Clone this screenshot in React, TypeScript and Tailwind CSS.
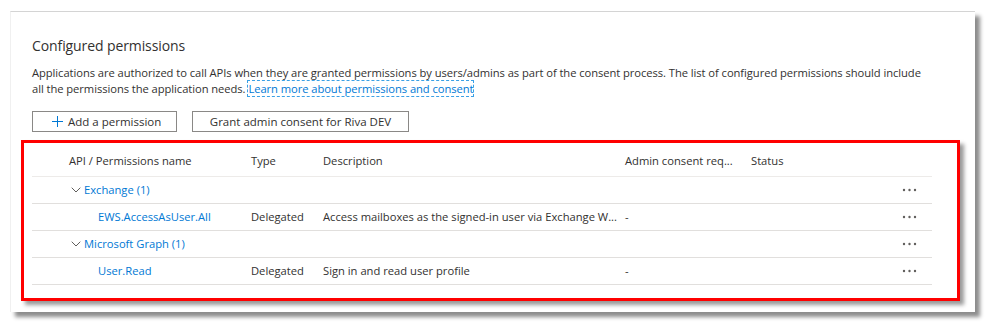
import React from "react";

const rows = [
  { kind: "group", name: "Exchange (1)" },
  { kind: "item", name: "EWS.AccessAsUser.All", type: "Delegated", desc: "Access mailboxes as the signed-in user via Exchange W...", admin: "-" },
  { kind: "group", name: "Microsoft Graph (1)" },
  { kind: "item", name: "User.Read", type: "Delegated", desc: "Sign in and read user profile", admin: "-" },
];

function Dots() {
  return (
    <svg width="15" height="4" viewBox="0 0 15 4" className="block">
      <circle cx="2" cy="2" r="1.2" fill="#605e5c" />
      <circle cx="7.5" cy="2" r="1.2" fill="#605e5c" />
      <circle cx="13" cy="2" r="1.2" fill="#605e5c" />
    </svg>
  );
}

function Chevron() {
  return (
    <svg width="10" height="6" viewBox="0 0 10 6" className="block">
      <path d="M0.7 0.7 L5 5 L9.3 0.7" fill="none" stroke="#605e5c" strokeWidth="1" />
    </svg>
  );
}

const grid = "grid grid-cols-[219px_72px_302px_126px_1fr_30px] items-center";

export default function App() {
  return (
    <div className="w-[986px] h-[325px] bg-white pt-[11px] pl-[10px]" style={{ fontFamily: "'Open Sans', 'Noto Sans', sans-serif" }}>
      <div className="w-[965px] h-[301px] bg-white border-t border-t-[#d4d4d4] border-l border-l-[#f0f0f0] shadow-[5px_5px_4px_rgba(0,0,0,0.45)] pl-[21px] pt-[24px] text-[#323130]">
        <div className="text-[14px] leading-[20px] tracking-[-0.1px]">Configured permissions</div>
        <div className="mt-[9px] text-[11.2px] leading-[16px] w-[910px] tracking-[-0.06px]">
          Applications are authorized to call APIs when they are granted permissions by users/admins as part of the consent process. The list of configured permissions should include
          <br />
          all the permissions the application needs.{" "}
          <span className="text-[#0078d4] outline outline-1 outline-dashed outline-[#3aa0e6] outline-offset-0">Learn more about permissions and consent</span>
        </div>
        <div className="mt-[14px] flex gap-[15px]">
          <div className="w-[145px] h-[21px] border border-[#8a8886] flex items-center pl-[19px] text-[11.5px]">
            <svg width="11" height="11" viewBox="0 0 11 11" className="mr-[5px]">
              <path d="M5.5 0 V11 M0 5.5 H11" stroke="#0078d4" strokeWidth="1" />
            </svg>
            Add a permission
          </div>
          <div className="w-[217px] h-[21px] border border-[#8a8886] flex items-center justify-center text-[11.5px]">
            Grant admin consent for Riva DEV
          </div>
        </div>
        <div className="mt-[8px] ml-[-11px] w-[939px] h-[161px] border-[3px] border-[#ff0000] shadow-[4px_4px_4px_rgba(0,0,0,0.4)] pl-[8px] pr-[25px]">
          <div className="w-[900px] text-[11.2px]">
            <div className={`${grid} h-[34px] pt-[4px] border-b border-[#edebe9]`}>
              <div className="pl-[37px]">API / Permissions name</div>
              <div>Type</div>
              <div>Description</div>
              <div>Admin consent req...</div>
              <div>Status</div>
              <div />
            </div>
            {rows.map((r, i) => (
              <div key={i} className={`${grid} h-[27px] border-b border-[#e1dfdd]`}>
                {r.kind === "group" ? (
                  <div className="pl-[39px] flex items-center gap-[3px] text-[#0078d4]">
                    <Chevron />
                    <span>{r.name}</span>
                  </div>
                ) : (
                  <div className="pl-[66px] text-[#0078d4]">{r.name}</div>
                )}
                <div>{r.type ?? ""}</div>
                <div className="whitespace-nowrap">{r.desc ?? ""}</div>
                <div>{r.admin ?? ""}</div>
                <div />
                <div className="flex justify-start"><Dots /></div>
              </div>
            ))}
          </div>
        </div>
      </div>
    </div>
  );
}
